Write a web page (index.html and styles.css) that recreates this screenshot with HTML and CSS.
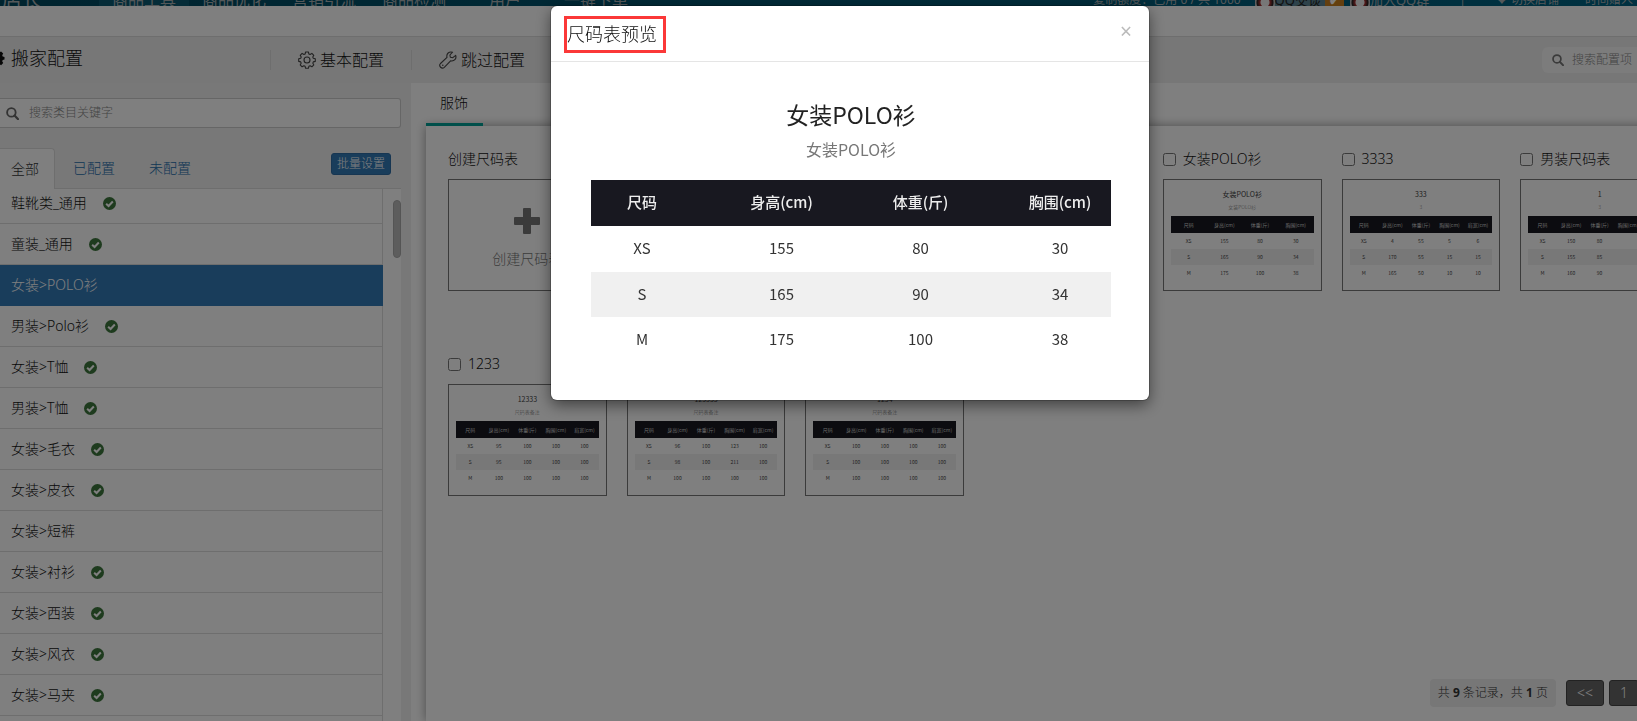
FILE: index.html
```html
<!DOCTYPE html>
<html lang="zh-CN">
<head>
    <meta charset="UTF-8">
    <meta name="viewport" content="width=device-width, initial-scale=1.0">
    <title>搬家配置</title>
    <link rel="stylesheet" href="styles.css">
</head>
<body>
    <svg class="sprite" aria-hidden="true">
        <symbol id="icon-check" viewBox="0 0 14 14">
            <circle cx="7" cy="7" r="7" fill="currentColor"/>
            <path d="M3.4 7.2l2.6 2.5 4.6-4.8" fill="none" stroke="#fff" stroke-width="2.2"/>
        </symbol>
        <symbol id="icon-search" viewBox="0 0 14 14">
            <circle cx="5.8" cy="5.8" r="4.6" fill="none" stroke="currentColor" stroke-width="2"/>
            <path d="M9.2 9.2l3.6 3.8" stroke="currentColor" stroke-width="2.4" stroke-linecap="round"/>
        </symbol>
        <symbol id="icon-cog" viewBox="0 0 18 18">
            <path d="M7.400 1h3.200l.5 2 1.200.5 1.800-1.100 2.100 2.100-1 1.800.5 1.200 1.800.5v2.600l-1.800.5-.5 1.200 1 1.800-2.100 2.100-1.800-1-1.200.5-.5 2H7.400l-.5-2-1.200-.5-1.800 1-2.100-2.100 1-1.800-.5-1.200-1.800-.5V8l1.800-.5.5-1.200-1-1.800 2.100-2.100 1.800 1.100 1.200-.5z" fill="currentColor"/>
            <circle cx="9" cy="9" r="2.600" fill="#eee"/>
        </symbol>
        <symbol id="icon-gear" viewBox="0 0 18 18">
            <g fill="none" stroke="currentColor" stroke-width="1.100" stroke-linejoin="round">
                <path d="M7.600 1h2.800l.5 2 1.200.5 1.800-1.100 1.900 1.900-1 1.800.5 1.200 2 .5v2.600l-2 .5-.5 1.200 1 1.800-1.900 1.900-1.800-1-1.200.5-.5 2H7.600l-.5-2-1.200-.5-1.800 1-1.900-1.900 1-1.800-.5-1.200-2-.5V7.800l2-.5.5-1.200-1-1.800 1.900-1.900 1.800 1.100 1.200-.5z"/>
                <circle cx="9" cy="9" r="3"/>
            </g>
        </symbol>
        <symbol id="icon-wrench" viewBox="0 0 18 18">
            <path d="M16.700 4.300l-2.900 2.400-2.400-.4-.5-2.300 2.600-2.800c-3.400-1-6.400 1.500-5.500 5.100L1.500 12.500c-2.300 2.600 1.300 6.100 3.800 3.800l6.300-6.500c3.500.8 6.200-2 5.100-5.500z" fill="none" stroke="currentColor" stroke-width="1.100" stroke-linejoin="round"/>
            <circle cx="3.800" cy="14.200" r=".8" fill="currentColor"/>
        </symbol>
    </svg>

    <div class="page">
        <nav class="top-nav">
            <span class="brand">超级店长</span>
            <div class="nav-links">
                <a href="#" class="active">商品工具</a>
                <a href="#">商品优化</a>
                <a href="#">营销引流</a>
                <a href="#">商品检测</a>
                <a href="#" class="user">用户</a>
                <a href="#">一键下单</a>
            </div>
            <div class="nav-tools">
                <span>复制额度：已用 0 / 共 1000</span>
                <a href="#" class="qq-chat"><i class="avatar"></i>QQ交谈<b>✔</b></a>
                <a href="#" class="qq-group"><i class="avatar"></i>加入QQ群</a>
                <span class="sep">|</span>
                <a href="#" class="shop">♥ 切换店铺</a>
                <a href="#">时间赠人</a>
            </div>
        </nav>

        <header class="toolbar">
            <h1><svg class="cog"><use href="#icon-cog"/></svg>搬家配置</h1>
            <a href="#" class="tool"><svg><use href="#icon-gear"/></svg>基本配置</a>
            <a href="#" class="tool"><svg><use href="#icon-wrench"/></svg>跳过配置</a>
            <label class="config-search">
                <svg><use href="#icon-search"/></svg>
                <input type="text" placeholder="搜索配置项" aria-label="搜索配置项">
            </label>
        </header>

        <div class="content">
            <aside class="sidebar">
                <label class="category-search">
                    <svg><use href="#icon-search"/></svg>
                    <input type="text" placeholder="搜索类目关键字" aria-label="搜索类目关键字">
                </label>
                <div class="filters">
                    <a href="#" class="active">全部</a>
                    <a href="#">已配置</a>
                    <a href="#">未配置</a>
                    <button type="button" class="batch-btn">批量设置</button>
                </div>
                <div class="category-box">
                    <ul class="categories">
                        <li>鞋靴类_通用<svg><use href="#icon-check"/></svg></li>
                        <li>童装_通用<svg><use href="#icon-check"/></svg></li>
                        <li class="selected">女装&gt;POLO衫</li>
                        <li>男装&gt;Polo衫<svg><use href="#icon-check"/></svg></li>
                        <li>女装&gt;T恤<svg><use href="#icon-check"/></svg></li>
                        <li>男装&gt;T恤<svg><use href="#icon-check"/></svg></li>
                        <li>女装&gt;毛衣<svg><use href="#icon-check"/></svg></li>
                        <li>女装&gt;皮衣<svg><use href="#icon-check"/></svg></li>
                        <li>女装&gt;短裤</li>
                        <li>女装&gt;衬衫<svg><use href="#icon-check"/></svg></li>
                        <li>女装&gt;西装<svg><use href="#icon-check"/></svg></li>
                        <li>女装&gt;风衣<svg><use href="#icon-check"/></svg></li>
                        <li>女装&gt;马夹<svg><use href="#icon-check"/></svg></li>
                    </ul>
                    <div class="scroll-track"><div class="scroll-thumb"></div></div>
                </div>
            </aside>

            <main class="main">
                <div class="tabs"><a href="#">服饰</a></div>
                <section class="panel">
                    <div class="cards" id="cards">
                        <div class="card">
                            <div class="card-title">创建尺码表</div>
                            <button type="button" class="create">
                                <svg viewBox="0 0 26 26"><path d="M10 0h6a1 1 0 0 1 1 1v8h8a1 1 0 0 1 1 1v6a1 1 0 0 1-1 1h-8v8a1 1 0 0 1-1 1h-6a1 1 0 0 1-1-1v-8H1a1 1 0 0 1-1-1v-6a1 1 0 0 1 1-1h8V1a1 1 0 0 1 1-1z" fill="currentColor"/></svg>
                                创建尺码表
                            </button>
                        </div>
                    </div>
                    <div class="pagination">
                        <span class="total">共 <b>9</b> 条记录，共 <b>1</b> 页</span>
                        <button type="button">&lt;&lt;</button>
                        <button type="button">1</button>
                    </div>
                </section>
            </main>
        </div>
    </div>

    <div class="backdrop">
        <div class="modal" role="dialog" aria-labelledby="modal-title">
            <div class="modal-header">
                <h2 id="modal-title">尺码表预览</h2>
                <button type="button" class="close" aria-label="关闭">×</button>
            </div>
            <div class="modal-body">
                <h3>女装POLO衫</h3>
                <p>女装POLO衫</p>
                <table class="size-table">
                    <thead>
                        <tr><th>尺码</th><th>身高(cm)</th><th>体重(斤)</th><th>胸围(cm)</th></tr>
                    </thead>
                    <tbody>
                        <tr><td>XS</td><td>155</td><td>80</td><td>30</td></tr>
                        <tr><td>S</td><td>165</td><td>90</td><td>34</td></tr>
                        <tr><td>M</td><td>175</td><td>100</td><td>38</td></tr>
                    </tbody>
                </table>
            </div>
        </div>
    </div>

    <script>
        const head4 = ['尺码', '身高(cm)', '体重(斤)', '胸围(cm)'];
        const head5 = [...head4, '肩宽(cm)'];

        const sizeCharts = [
            { name: '女装POLO衫', title: '女装POLO衫', note: '女装POLO衫', head: head4, first: true,
              rows: [['XS', 155, 80, 30], ['S', 165, 90, 34], ['M', 175, 100, 38]] },
            { name: '3333', title: '333', note: '3', head: head5,
              rows: [['XS', 4, 55, 5, 6], ['S', 170, 55, 15, 15], ['M', 165, 50, 10, 10]] },
            { name: '男装尺码表', title: '1', note: '3', head: head5,
              rows: [['XS', 150, 80, '', ''], ['S', 155, 85, '', ''], ['M', 160, 90, '', '']] },
            { name: '1233', title: '12333', note: '尺码表备注', head: head5,
              rows: [['XS', 95, 100, 100, 100], ['S', 95, 100, 100, 100], ['M', 100, 100, 100, 100]] },
            { name: '123333', title: '123333', note: '尺码表备注', head: head5,
              rows: [['XS', 96, 100, 123, 100], ['S', 98, 100, 211, 100], ['M', 100, 100, 100, 100]] },
            { name: '1234', title: '1234', note: '尺码表备注', head: head5,
              rows: [['XS', 100, 100, 100, 100], ['S', 100, 100, 100, 100], ['M', 100, 100, 100, 100]] }
        ];

        const cells = (tag, list) => list.map(v => `<${tag}>${v}</${tag}>`).join('');

        document.getElementById('cards').insertAdjacentHTML('beforeend', sizeCharts.map(chart => `
            <div class="card${chart.first ? ' card-fifth' : ''}">
                <label class="card-title"><input type="checkbox">${chart.name}</label>
                <div class="thumb">
                    <strong>${chart.title}</strong>
                    <small>${chart.note}</small>
                    <table>
                        <thead><tr>${cells('th', chart.head)}</tr></thead>
                        <tbody>${chart.rows.map(r => `<tr>${cells('td', r)}</tr>`).join('')}</tbody>
                    </table>
                </div>
            </div>`).join(''));
    </script>
</body>
</html>
```
FILE: styles.css
```css
* {
    box-sizing: border-box;
}

body {
    margin: 0;
    height: 100vh;
    overflow: hidden;
    font-family: "Noto Sans", "Noto Sans CJK SC", sans-serif;
    font-size: 14px;
    font-weight: 300;
    line-height: 20px;
    color: #111;
    background: #fff;
}

a {
    color: inherit;
    text-decoration: none;
}

button,
input {
    font: inherit;
}

.sprite {
    display: none;
}

/* the page is a little wider than the window */
.page {
    display: flex;
    flex-direction: column;
    width: calc(100% + 64px);
    height: 100vh;
}

/* top navigation, scrolled almost out of view */
.top-nav {
    display: flex;
    align-items: flex-end;
    flex: none;
    height: 6px;
    padding-right: 68px;
    overflow: hidden;
    background: linear-gradient(to right, #00485e, #006484);
    color: #a8b0b4;
    font-weight: 400;
    line-height: 12px;
}

.brand {
    margin-left: -38px;
    font-size: 20px;
}

.nav-links {
    display: flex;
    margin-left: 57px;
    font-size: 16px;
}

.nav-links a {
    padding: 0 13px;
}

.nav-links .active {
    background: #0a5870;
}

.nav-links .user {
    padding: 0 30px;
}

.nav-tools {
    display: flex;
    align-items: flex-end;
    gap: 14px;
    margin-left: auto;
    font-size: 12px;
    white-space: nowrap;
}

.qq-chat,
.qq-group {
    display: flex;
    font-size: 13px;
}

.qq-chat {
    background: #5c8494;
    color: #222;
}

.qq-chat b {
    margin-left: 4px;
    padding: 0 4px;
    background: #c87e1e;
    color: #fff;
}

.qq-group {
    margin-left: -8px;
}

.avatar {
    width: 20px;
    background: radial-gradient(circle at 50% 70%, #eee 4px, #a33 5px, #222 8px, #bbb 9px);
}

.sep {
    padding: 0 16px;
}

.shop {
    padding-right: 12px;
}

/* toolbar */
.toolbar {
    display: flex;
    align-items: center;
    flex: none;
    height: 47px;
    margin-top: 30px;
    padding-right: 64px;
    border-top: 1px solid #ddd;
    background: #eee;
}

.toolbar svg {
    width: 18px;
    height: 18px;
}

.toolbar h1 {
    display: flex;
    align-items: center;
    gap: 6px;
    width: 270px;
    margin: 0 0 4px;
    font-size: 18px;
    font-weight: 300;
}

.toolbar h1 .cog {
    margin-left: -13px;
}

.tool {
    display: flex;
    align-items: center;
    gap: 4px;
    width: 141px;
    padding-left: 27px;
    border-left: 1px solid #ddd;
    font-size: 16px;
}

.tool svg {
    color: #444;
}

.config-search {
    display: flex;
    align-items: center;
    gap: 8px;
    width: 120px;
    height: 26px;
    margin-left: auto;
    margin-right: -25px;
    padding-left: 10px;
    border-radius: 6px;
    background: #f8f8f8;
    color: #777;
}

.config-search svg {
    flex: none;
    width: 12px;
    height: 12px;
}

.config-search input,
.category-search input {
    flex: 1;
    min-width: 0;
    padding: 0;
    border: 0;
    outline: 0;
    background: none;
    font-size: 12px;
}

::placeholder {
    color: #888;
    opacity: 1;
}

.content {
    display: flex;
    flex: 1;
    min-height: 0;
}

/* category sidebar */
.sidebar {
    display: flex;
    flex-direction: column;
    flex: none;
    width: 411px;
    padding: 15px 10px 0 0;
    background: #f0f0f0;
}

.category-search {
    display: flex;
    align-items: center;
    gap: 10px;
    flex: none;
    height: 30px;
    padding-left: 6px;
    border: 1px solid #ccc;
    border-left: 0;
    border-radius: 0 3px 3px 0;
    background: #fff;
    color: #666;
}

.category-search svg {
    width: 13px;
    height: 13px;
}

.filters {
    display: flex;
    flex: none;
    height: 41px;
    margin-top: 20px;
    border-bottom: 1px solid #ddd;
}

.filters a {
    height: 41px;
    padding: 0 16px 0 18px;
    color: #236cab;
    line-height: 40px;
}

.filters .active {
    width: 55px;
    padding: 0 0 0 11px;
    border: 1px solid #ddd;
    border-width: 1px 1px 0 0;
    border-radius: 0 4px 0 0;
    background: #fff;
    color: #333;
}

.batch-btn {
    height: 22px;
    margin: 5px 10px 0 auto;
    padding: 0 5px;
    border: 1px solid #2e6da4;
    border-radius: 3px;
    background: #337ab7;
    color: #fff;
    font-size: 12px;
    line-height: 20px;
}

.category-box {
    display: flex;
    flex: 1;
    min-height: 0;
    overflow: hidden;
    background: #fff;
}

.categories {
    flex: 1;
    margin: -6px 0 0;
    padding: 0;
    border-right: 1px solid #ddd;
    list-style: none;
}

.categories li {
    display: flex;
    align-items: center;
    gap: 16px;
    height: 41px;
    padding-left: 11px;
    border-bottom: 1px solid #ddd;
}

.categories svg {
    width: 13px;
    height: 13px;
    color: #3c763d;
}

.categories .selected {
    margin-right: -1px;
    border-color: #337ab7;
    background: #337ab7;
    color: #fff;
}

.scroll-track {
    display: flex;
    justify-content: flex-end;
    width: 18px;
    padding-top: 11px;
}

.scroll-thumb {
    width: 8px;
    height: 58px;
    border: 1px solid #aaa;
    border-radius: 4px;
    background: #bbb;
}

/* size chart area */
.main {
    display: flex;
    flex-direction: column;
    flex: 1;
    min-width: 0;
    padding-left: 15px;
}

.tabs {
    display: flex;
    flex: none;
    height: 43px;
}

.tabs a {
    z-index: 1;
    padding: 10px 15px 0 14px;
    border-bottom: 3px solid #009e94;
}

.panel {
    display: flex;
    flex-direction: column;
    flex: 1;
    padding: 23px 22px 14px;
    background: #fff;
    box-shadow: 0 0 10px rgba(0, 0, 0, 0.4);
}

.cards {
    display: grid;
    grid-template-columns: repeat(7, 1fr);
    gap: 63px 20px;
}

.card {
    display: flex;
    flex-direction: column;
    gap: 10px;
    min-width: 0;
}

.card-fifth {
    grid-column-start: 5;
}

.card-title {
    display: flex;
    align-items: center;
    gap: 7px;
}

.card-title input {
    width: 13px;
    height: 13px;
    margin: 0;
}

.create,
.thumb {
    display: flex;
    flex-direction: column;
    align-items: center;
    height: 112px;
    border: 1px solid #777;
    background: none;
}

.create {
    justify-content: center;
    gap: 15px;
    padding-top: 8px;
    color: #777;
}

.create svg {
    width: 26px;
    height: 26px;
}

.thumb {
    padding: 9px 7px 0;
    font-family: "Noto Sans CJK SC", sans-serif;
    font-size: 5px;
    line-height: 6px;
    color: #444;
}

.thumb strong {
    font-size: 7px;
    font-weight: 400;
    line-height: 10px;
}

.thumb small {
    margin: 5px 0 6px;
    font-size: 5px;
    color: #777;
}

.thumb table {
    width: 100%;
    table-layout: fixed;
    border-collapse: collapse;
}

.thumb th,
.thumb td {
    height: 16px;
    padding: 0;
    font-weight: 400;
    text-align: center;
    white-space: nowrap;
}

.thumb th {
    height: 17px;
    background: #181820;
    color: #ccc;
}

.thumb tr:nth-child(2) td,
.size-table tr:nth-child(2) td {
    background: #f0f0f0;
}

.pagination {
    display: flex;
    align-items: center;
    justify-content: flex-end;
    gap: 5px;
    margin-top: auto;
    padding-right: 40px;
}

.total {
    margin-right: 5px;
    padding: 4px 8px;
    border-radius: 4px;
    background: #eee;
    color: #333;
    font-size: 12px;
}

.total b {
    font-weight: 700;
}

.pagination button {
    height: 26px;
    padding: 0 10px;
    border: 1px solid #444;
    border-radius: 3px;
    background: #666;
    color: #fff;
}

/* preview dialog */
.backdrop {
    position: fixed;
    inset: 0;
    z-index: 10;
    display: flex;
    align-items: flex-start;
    justify-content: center;
    padding: 6px 0 0 63px;
    background: rgba(0, 0, 0, 0.5);
}

.modal {
    width: 598px;
    border-radius: 6px;
    background: #fff;
    box-shadow: 0 5px 15px rgba(0, 0, 0, 0.5), 0 0 0 1px rgba(0, 0, 0, 0.2);
}

.modal-header {
    display: flex;
    align-items: flex-start;
    justify-content: space-between;
    height: 56px;
    padding: 10px 13px;
    border-bottom: 1px solid #e5e5e5;
}

.modal-header h2 {
    height: 37px;
    margin: 0;
    padding-right: 6px;
    border: 3px solid #fb3838;
    font-size: 18px;
    font-weight: 300;
    line-height: 30px;
}

.close {
    padding: 0 4px;
    border: 0;
    background: none;
    color: #bbb;
    font-size: 21px;
    font-weight: 400;
    line-height: 30px;
}

.modal-body {
    padding: 36px 38px 38px 40px;
    color: #333;
    font-family: "Noto Sans CJK SC", sans-serif;
    font-weight: 400;
    text-align: center;
}

.modal-body h3 {
    margin: 0;
    color: #222;
    font-size: 23px;
    font-weight: 400;
    line-height: 32px;
}

.modal-body p {
    margin: 7px 0 19px;
    color: #777;
    font-size: 16px;
    line-height: 24px;
}

.size-table {
    width: 100%;
    table-layout: fixed;
    border-collapse: collapse;
    font-size: 15px;
}

.size-table th,
.size-table td {
    height: 46px;
    padding: 0 0 2px;
}

.size-table td {
    height: 45px;
}

.size-table th {
    background: #181820;
    color: #eee;
    font-weight: 500;
}

.size-table tbody tr:first-child td {
    height: 46px;
}

/* outer columns are narrower so the texts stay evenly spaced */
.size-table th:first-child,
.size-table th:last-child {
    width: 121px;
}

.size-table tr > :first-child {
    padding-right: 19px;
}

.size-table tr > :last-child {
    padding-left: 19px;
}
```
